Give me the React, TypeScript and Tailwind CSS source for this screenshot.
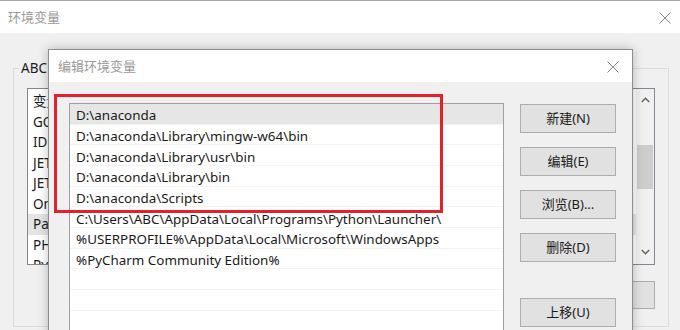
import React from "react";

const font = { fontFamily: '"Noto Sans", "Noto Sans CJK SC", sans-serif' };

function XIcon() {
  return (
    <svg width="12" height="12" viewBox="0 0 12 12" fill="none">
      <path d="M0.5 0.5 L11.5 11.5 M11.5 0.5 L0.5 11.5" stroke="#8a8a8a" strokeWidth="1" />
    </svg>
  );
}

function Chevron({ up }: { up?: boolean }) {
  return (
    <svg width="9" height="6" viewBox="0 0 9 6" fill="none">
      <path d={up ? "M0.8 5 L4.5 1.2 L8.2 5" : "M0.8 1 L4.5 4.8 L8.2 1"} stroke="#606060" strokeWidth="1.4" />
    </svg>
  );
}

const bgRows = ["变量", "GOPATH", "IDEA", "JETBRAINS", "JETBRAINS", "OneDrive", "Path", "PHPSTORM", "PyCharm"];

const rows = [
  "D:\\anaconda",
  "D:\\anaconda\\Library\\mingw-w64\\bin",
  "D:\\anaconda\\Library\\usr\\bin",
  "D:\\anaconda\\Library\\bin",
  "D:\\anaconda\\Scripts",
  "C:\\Users\\ABC\\AppData\\Local\\Programs\\Python\\Launcher\\",
  "%USERPROFILE%\\AppData\\Local\\Microsoft\\WindowsApps",
  "%PyCharm Community Edition%",
  "",
  "",
  "",
  "",
];

function Btn({ label, className = "" }: { label: string; className?: string }) {
  return (
    <div
      className={
        "w-[96px] h-[29px] shrink-0 flex items-center justify-center bg-[#e1e1e1] border border-[#adadad] text-[13px] text-[#1a1a1a] " +
        className
      }
    >
      {label}
    </div>
  );
}

export default function App() {
  return (
    <div className="relative w-[680px] h-[330px] overflow-hidden bg-[#f0f0f0]" style={font}>
      {/* background window */}
      <div className="flex flex-col border-t border-[#a6a6a6]">
        <div className="h-[32px] shrink-0 bg-white flex items-center justify-between pl-[8px] pr-[9px] pt-[1px]">
          <span className="text-[13px] text-[#9a9a9a]">环境变量</span>
          <XIcon />
        </div>
        <div className="pl-[13px] pr-[11px] pt-[35px]">
          <div className="relative h-[259px] border border-[#dcdcdc] pl-[13px] pr-[13px] pt-[19px] flex flex-col">
            <span className="absolute left-[5px] top-[-10px] px-[2px] bg-[#f0f0f0] text-[13.5px] leading-[18px] text-[#1a1a1a]">
              ABC 的用户变量(U)
            </span>
            <div className="h-[177px] shrink-0 bg-white border border-[#828790] flex overflow-hidden">
              <div className="flex-1 pt-[2px] overflow-hidden">
                {bgRows.map((r, i) => (
                  <div
                    key={i}
                    className={
                      "h-[20.5px] flex items-center pl-[5px] text-[13.5px] text-[#1a1a1a] whitespace-nowrap " +
                      (i === 6 ? "bg-[#e5e5e5]" : "")
                    }
                  >
                    {r}
                  </div>
                ))}
              </div>
              <div className="w-[18px] bg-[#f0f0f0] flex flex-col items-center">
                <div className="h-[20px] flex items-center justify-center pt-[2px]">
                  <Chevron up />
                </div>
                <div className="h-[36px]" />
                <div className="w-[16px] h-[44px] bg-[#cdcdcd]" />
                <div className="flex-1" />
                <div className="h-[22px] flex items-center justify-center pb-[2px]">
                  <Chevron />
                </div>
              </div>
            </div>
            <div className="mt-[16px] self-end w-[96px] h-[28px] bg-[#e1e1e1] border border-[#adadad]" />
          </div>
        </div>
      </div>

      {/* edit dialog */}
      <div className="absolute left-[48px] top-[49px] w-[585px] h-[290px] bg-[#f0f0f0] border border-[#8e8e8e] shadow-[0_0_10px_rgba(0,0,0,0.25)] flex flex-col overflow-hidden">
        <div className="h-[32px] shrink-0 bg-white flex items-center justify-between pl-[9px] pr-[13px] pt-[1px]">
          <span className="text-[13px] text-[#9a9a9a]">编辑环境变量</span>
          <XIcon />
        </div>
        <div className="flex items-start pl-[20px] pt-[21px] shrink-0">
          <div className="w-[435px] h-[300px] shrink-0 bg-white border border-[#a0a0a0]">
            {rows.map((r, i) => (
              <div
                key={i}
                className={
                  "h-[20.67px] flex items-center pl-[6px] pt-[3px] text-[13.4px] text-[#1a1a1a] whitespace-nowrap border-b border-[#f3f3f3] " +
                  (i === 0 ? "bg-[#e6e6e6]" : "")
                }
              >
                {r}
              </div>
            ))}
          </div>
          <div className="ml-[16px] pt-[1px] flex flex-col">
            <Btn label="新建(N)" />
            <Btn label="编辑(E)" className="mt-[14px]" />
            <Btn label="浏览(B)..." className="mt-[14px]" />
            <Btn label="删除(D)" className="mt-[14px]" />
            <Btn label="上移(U)" className="mt-[36px]" />
          </div>
        </div>
      </div>

      {/* red highlight */}
      <div className="absolute left-[54px] top-[94px] w-[389px] h-[119px] border-[3px] border-[#e5202c]" />
    </div>
  );
}
